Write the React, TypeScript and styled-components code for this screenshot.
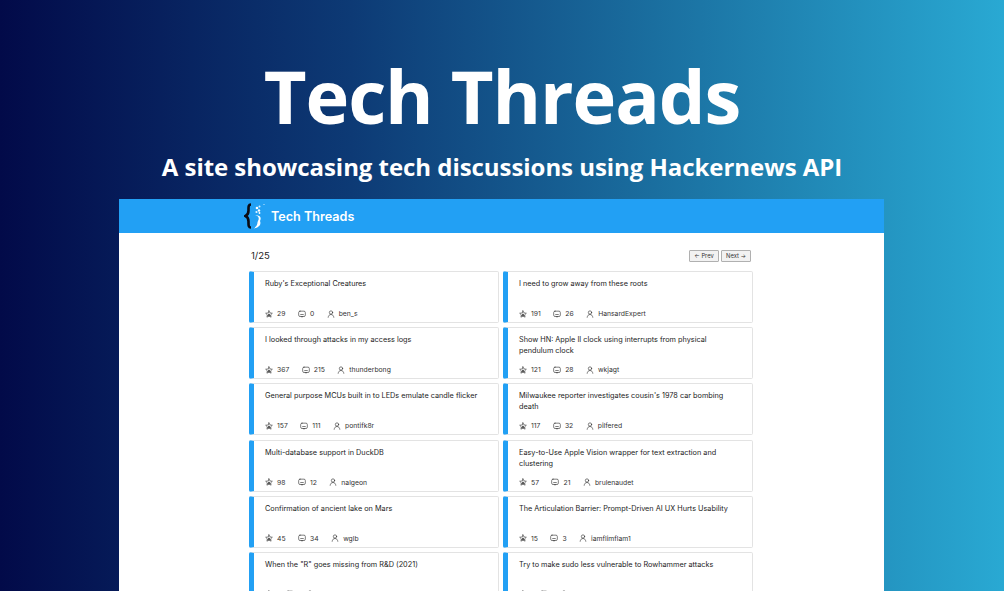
import React from 'react';
import styled, { createGlobalStyle } from 'styled-components';

const GlobalStyle = createGlobalStyle`
  html, body {
    margin: 0;
    padding: 0;
    height: 591px;
    overflow: hidden;
  }
`;

const Banner = styled.div`
  width: 1004px;
  height: 591px;
  overflow: hidden;
  display: flex;
  flex-direction: column;
  align-items: center;
  background: linear-gradient(90deg, #020a49 0%, #0d3a75 35%, #1a6e9f 65%, #29a9d3 100%);
  font-family: 'Open Sans', sans-serif;
`;

const Heading = styled.h1`
  margin: 46px 0 0;
  font-size: 74px;
  line-height: 100px;
  font-weight: 700;
  letter-spacing: -1.1px;
  color: #fff;
`;

const Subheading = styled.h2`
  margin: 4px 0 0;
  font-size: 24px;
  line-height: 33px;
  font-weight: 700;
  letter-spacing: -0.05px;
  color: #fff;
`;

const Frame = styled.div`
  width: 765px;
  margin: 16px 1px 0 0;
  flex: 1;
  background: #fff;
  font-family: 'Inter', sans-serif;
`;

const Navbar = styled.header`
  height: 34px;
  background: #22a0f4;
  padding-left: 125px;
  display: flex;
  align-items: center;
  gap: 5px;
`;

const Brand = styled.span`
  font-size: 12.6px;
  font-weight: 600;
  color: #fff;
`;

const Content = styled.main`
  width: 503px;
  margin-left: 130px;
`;

const Pager = styled.div`
  height: 38px;
  display: flex;
  align-items: center;
  justify-content: space-between;
  padding: 7px 1px 0 2px;
  box-sizing: border-box;
`;

const Count = styled.span`
  font-size: 9.5px;
  color: #222;
`;

const Buttons = styled.div`
  display: flex;
  gap: 2px;
`;

const PagerButton = styled.button`
  width: 30px;
  height: 12px;
  padding: 0;
  border: 1px solid #b0b0b0;
  border-radius: 1px;
  background: #f2f2f2;
  font-family: inherit;
  font-size: 5.8px;
  color: #333;
`;

const Grid = styled.div`
  display: grid;
  grid-template-columns: 249.5px 249.5px;
  column-gap: 4.5px;
  row-gap: 4.2px;
`;

const Card = styled.article`
  height: 52px;
  box-sizing: border-box;
  padding: 6px 16px 1px 11px;
  border: 1px solid #e3e3e3;
  border-left: 5px solid #22a0f4;
  border-radius: 2px;
  display: flex;
  flex-direction: column;
`;

const CardTitle = styled.div`
  flex: 1;
  font-size: 7.3px;
  line-height: 11px;
  color: #1c1c1c;
`;

const Meta = styled.div`
  height: 15px;
  display: flex;
  align-items: center;
  gap: 12.5px;
  font-size: 6.8px;
  color: #333;
`;

const MetaItem = styled.span`
  display: flex;
  align-items: center;
  gap: 4px;
`;

const MetaIcon = styled.svg`
  width: 8px;
  height: 8px;
  fill: none;
  stroke: #2a2a2a;
  stroke-width: 1.8;
  stroke-linejoin: round;
  stroke-linecap: round;
`;

const StarIcon = () => (
  <MetaIcon viewBox="0 0 24 24" aria-hidden="true">
    <path d="M12 2.500l3 6.400 7 .9-5.100 4.800 1.300 6.900-6.200-3.400-6.200 3.400 1.300-6.900L2 9.800l7-.9z" />
    <path d="M9 16.500l3-5 3 5z" fill="#2a2a2a" />
  </MetaIcon>
);

const CommentIcon = () => (
  <MetaIcon viewBox="0 0 24 24" aria-hidden="true">
    <rect x="2" y="3.500" width="20" height="16" rx="4" />
    <path d="M8 13.500h8" />
    <path d="M9.500 19.500l2.500 2 2.500-2" />
  </MetaIcon>
);

const UserIcon = () => (
  <MetaIcon viewBox="0 0 24 24" aria-hidden="true">
    <circle cx="12" cy="7.500" r="5" />
    <path d="M3.500 22c.5-5.500 4-8.500 8.500-8.500s8 3 8.500 8.500" />
  </MetaIcon>
);

const Logo = () => (
  <svg width="22" height="26" viewBox="0 0 22 26" aria-hidden="true">
    <path
      d="M7 1.500C4.200 1.500 4.500 4 4.500 7.500c0 3-.8 4.500-3 5.500 2.200 1 3 2.500 3 5.500 0 3.500-.3 6 2.500 6"
      fill="none"
      stroke="#0b0b12"
      strokeWidth="2.600"
    />
    <path d="M11 12c4 1 4.500 3.500 3 6-1.200 2 .5 3.500-4 7.500 5-1 7.500-4 6-7.500 1.500-3 1-5.500-5-6z" fill="#fff" />
    <circle cx="13" cy="5" r="1.300" fill="#fff" />
    <circle cx="15.500" cy="3.500" r="1" fill="#d6efff" />
    <circle cx="15" cy="7.500" r="1.200" fill="#fff" />
    <circle cx="12.500" cy="9" r="1.100" fill="#e8f6ff" />
    <circle cx="15.500" cy="10" r="0.900" fill="#fff" />
    <circle cx="20" cy="1.500" r="0.500" fill="#fff" />
  </svg>
);

// the last row is cut by the bottom edge, its numbers can't be read
const stories = [
  { title: "Ruby's Exceptional Creatures", points: 29, comments: 0, author: 'ben_s' },
  { title: 'I need to grow away from these roots', points: 191, comments: 26, author: 'HansardExpert' },
  { title: 'I looked through attacks in my access logs', points: 367, comments: 215, author: 'thunderbong' },
  { title: 'Show HN: Apple II clock using interrupts from physical pendulum clock', points: 121, comments: 28, author: 'wkjagt' },
  { title: 'General purpose MCUs built in to LEDs emulate candle flicker', points: 157, comments: 111, author: 'pontifk8r' },
  { title: "Milwaukee reporter investigates cousin's 1978 car bombing death", points: 117, comments: 32, author: 'pilfered' },
  { title: 'Multi-database support in DuckDB', points: 98, comments: 12, author: 'nalgeon' },
  { title: 'Easy-to-Use Apple Vision wrapper for text extraction and clustering', points: 57, comments: 21, author: 'brulenaudet' },
  { title: 'Confirmation of ancient lake on Mars', points: 45, comments: 34, author: 'wglb' },
  { title: 'The Articulation Barrier: Prompt-Driven AI UX Hurts Usability', points: 15, comments: 3, author: 'iamflimflam1' },
  { title: 'When the "R" goes missing from R&D (2021)', points: '', comments: '', author: '' },
  { title: 'Try to make sudo less vulnerable to Rowhammer attacks', points: '', comments: '', author: '' },
];

const App = () => {
  return (
    <Banner>
      <GlobalStyle />
      <Heading>Tech Threads</Heading>
      <Subheading>A site showcasing tech discussions using Hackernews API</Subheading>
      <Frame>
        <Navbar>
          <Logo />
          <Brand>Tech Threads</Brand>
        </Navbar>
        <Content>
          <Pager>
            <Count>1/25</Count>
            <Buttons>
              <PagerButton>← Prev</PagerButton>
              <PagerButton>Next →</PagerButton>
            </Buttons>
          </Pager>
          <Grid>
            {stories.map((story) => (
              <Card key={story.title}>
                <CardTitle>{story.title}</CardTitle>
                <Meta>
                  <MetaItem>
                    <StarIcon />
                    {story.points}
                  </MetaItem>
                  <MetaItem>
                    <CommentIcon />
                    {story.comments}
                  </MetaItem>
                  <MetaItem>
                    <UserIcon />
                    {story.author}
                  </MetaItem>
                </Meta>
              </Card>
            ))}
          </Grid>
        </Content>
      </Frame>
    </Banner>
  );
};

export default App;
